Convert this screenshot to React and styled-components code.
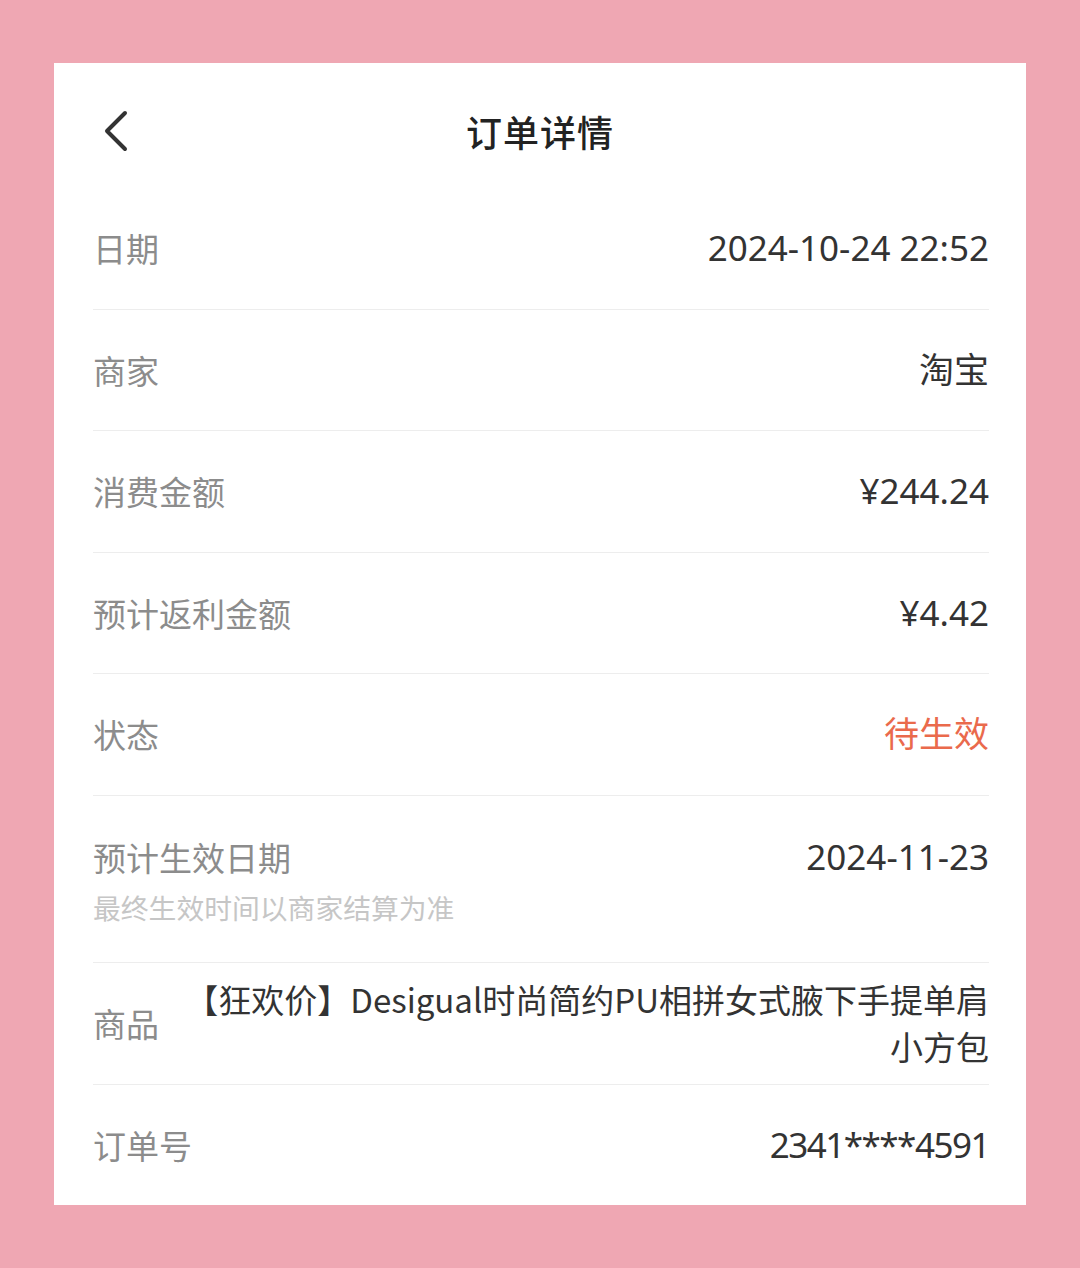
import React from "react";
import styled, { createGlobalStyle } from "styled-components";

const GlobalStyle = createGlobalStyle`
  html, body {
    margin: 0;
    padding: 0;
    background: #efa7b3;
  }
  body {
    font-family: "Noto Sans", "Noto Sans CJK SC", sans-serif;
    -webkit-font-smoothing: antialiased;
  }
`;

const Page = styled.div`
  padding: 63px 54px;
  background: #efa7b3;
`;

const Card = styled.div`
  background: #ffffff;
  height: 1142px;
  display: flex;
  flex-direction: column;
`;

const Header = styled.div`
  height: 115px;
  padding-top: 10px;
  display: grid;
  grid-template-columns: 120px 1fr 120px;
  align-items: center;
`;

const BackButton = styled.button`
  border: none;
  background: none;
  padding: 0 0 0 50px;
  display: flex;
  align-items: center;
  cursor: pointer;
`;

const Title = styled.h1`
  margin: 0;
  text-align: center;
  font-family: "Noto Sans CJK SC", sans-serif;
  font-size: 36px;
  font-weight: 500;
  color: #222;
  letter-spacing: 1px;
`;

const List = styled.div`
  margin: 0 37px 0 39px;
`;

const Row = styled.div`
  box-sizing: border-box;
  min-height: ${(p) => p.$height || 121.5}px;
  display: flex;
  align-items: ${(p) => (p.$top ? "flex-start" : "center")};
  justify-content: space-between;
  padding: ${(p) => p.$pad || "0"};
  border-bottom: ${(p) => (p.$last ? "none" : "1px solid #ededed")};
`;

const LabelBox = styled.div`
  display: flex;
  flex-direction: column;
  flex-shrink: 0;
`;

const Label = styled.span`
  font-family: "Noto Sans CJK SC", sans-serif;
  font-size: 33px;
  line-height: 44px;
  color: #8c8c8c;
`;

const Hint = styled.span`
  margin-top: 8px;
  font-family: "Noto Sans CJK SC", sans-serif;
  font-size: 27.8px;
  line-height: 40px;
  color: #c6c6c6;
`;

const Value = styled.span`
  font-size: 35px;
  line-height: 44px;
  color: ${(p) => p.$color || "#333"};
  text-align: right;
  letter-spacing: ${(p) => p.$tight || 0}px;
`;

const Product = styled.span`
  max-width: 810px;
  font-family: "Noto Sans CJK SC", sans-serif;
  font-size: 33px;
  line-height: 47px;
  color: #333;
  text-align: right;
`;

const ChevronLeft = () => (
  <svg width="26" height="44" viewBox="0 0 26 44" fill="none">
    <polyline
      points="21,4 3,22 21,40"
      stroke="#333"
      strokeWidth="4"
      strokeLinecap="round"
      strokeLinejoin="round"
    />
  </svg>
);

const rows = [
  { label: "日期", value: "2024-10-24 22:52" },
  { label: "商家", value: "淘宝" },
  { label: "消费金额", value: "¥244.24" },
  { label: "预计返利金额", value: "¥4.42" },
  { label: "状态", value: "待生效", color: "#ea6a4c" },
];

export default function App() {
  return (
    <>
      <GlobalStyle />
      <Page>
        <Card>
          <Header>
            <BackButton aria-label="返回">
              <ChevronLeft />
            </BackButton>
            <Title>订单详情</Title>
            <div />
          </Header>
          <List>
            {rows.map((r) => (
              <Row key={r.label}>
                <Label>{r.label}</Label>
                <Value $color={r.color}>{r.value}</Value>
              </Row>
            ))}
            <Row $top $height={167} $pad="39px 0 35px">
              <LabelBox>
                <Label>预计生效日期</Label>
                <Hint>最终生效时间以商家结算为准</Hint>
              </LabelBox>
              <Value>2024-11-23</Value>
            </Row>
            <Row $height={122} $pad="13px 0">
              <Label>商品</Label>
              <Product>【狂欢价】Desigual时尚简约PU相拼女式腋下手提单肩小方包</Product>
            </Row>
            <Row $last $height={120.5}>
              <Label>订单号</Label>
              <Value $tight={-1.5}>2341****4591</Value>
            </Row>
          </List>
        </Card>
      </Page>
    </>
  );
}
